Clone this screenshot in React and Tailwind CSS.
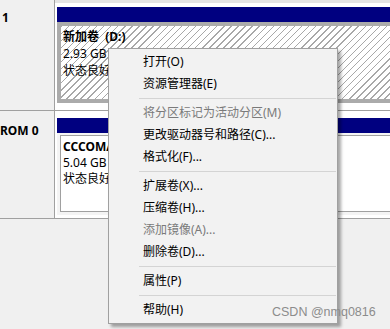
export default function App() {
  const items = [
    { t: '打开(O)' },
    { t: '资源管理器(E)' },
    'sep',
    { t: '将分区标记为活动分区(M)', d: true },
    { t: '更改驱动器号和路径(C)...' },
    { t: '格式化(F)...' },
    'sep',
    { t: '扩展卷(X)...' },
    { t: '压缩卷(H)...' },
    { t: '添加镜像(A)...', d: true },
    { t: '删除卷(D)...' },
    'sep',
    { t: '属性(P)' },
    'sep',
    { t: '帮助(H)' },
  ];
  return (
    <div className="relative w-[390px] h-[329px] overflow-hidden bg-[#f0f0f0] text-[12px] text-black font-['Noto_Sans','Noto_Sans_CJK_SC',sans-serif]">
      {/* Disk 1 row */}
      <div className="flex h-[111px] border-b border-[#a0a0a0]">
        <div className="w-[55px] shrink-0 border-r border-[#a0a0a0] pl-[2px] pt-[9px] font-bold leading-[17px]">1</div>
        <div className="flex-1 bg-white pl-[2px] pt-[7px] border-t-[3px] border-[#e4e4e4] -mt-0">
          <div className="h-[15px] bg-[#000080] -mt-[3px]" />
          <div className="bg-[#ababab] pt-[4px] pl-[4px] pb-[4px]">
            <div className="h-[73px] pl-[2px] pt-[2px] leading-[17px] whitespace-nowrap overflow-hidden bg-[image:repeating-linear-gradient(135deg,#a8a8a8_0px,#a8a8a8_1px,#ffffff_1px,#ffffff_5px)]">
              <div className="font-bold">新加卷&nbsp;&nbsp;(D:)</div>
              <div>2.93 GB NTFS</div>
              <div>状态良好 (基本数据分区)</div>
            </div>
          </div>
        </div>
      </div>
      {/* Disk 2 row */}
      <div className="flex h-[108px] border-b border-[#a0a0a0]">
        <div className="w-[55px] shrink-0 border-r border-[#a0a0a0] pt-[11px] font-bold leading-[17px] whitespace-nowrap overflow-hidden">ROM 0</div>
        <div className="flex-1 bg-white pl-[2px] pt-[7px]">
          <div className="h-[15px] bg-[#000080]" />
          <div className="bg-[#f4f4f4] pt-[2px] pl-[3px] pb-[3px]">
            <div className="h-[77px] border-l border-t border-b border-[#a0a0a0] bg-white pl-[2px] pt-[3px] leading-[16px] whitespace-nowrap overflow-hidden">
              <div className="font-bold">CCCOMA_X64FRE_ZH-CN_DV9 (E:)</div>
              <div>5.04 GB UDF</div>
              <div>状态良好 (主分区)</div>
            </div>
          </div>
        </div>
      </div>

      {/* Context menu */}
      <div className="absolute left-[108px] top-[48px] w-[230px] h-[276px] border border-[#a0a0a0] bg-[#f2f2f2] pt-[2px] shadow-[3px_3px_3px_rgba(0,0,0,0.35)]">
        {items.map((it, i) =>
          it === 'sep' ? (
            <div key={i} className="h-[7px] flex items-center pl-[30px] pr-[1px]">
              <div className="h-px w-full bg-[#d4d4d4]" />
            </div>
          ) : (
            <div
              key={i}
              className={
                it.d
                  ? 'h-[22px] flex items-center pl-[34px] text-[#7a7a7a] whitespace-nowrap'
                  : 'h-[22px] flex items-center pl-[34px] text-black whitespace-nowrap'
              }
            >
              {it.t}
            </div>
          )
        )}
      </div>

      {/* Watermark */}
      <div className="absolute left-[272px] top-[303px] text-[12.5px] leading-[18px] text-[#8c8c8c] font-['Liberation_Sans',Arial,sans-serif] whitespace-nowrap">
        CSDN @nmq0816
      </div>
    </div>
  );
}
